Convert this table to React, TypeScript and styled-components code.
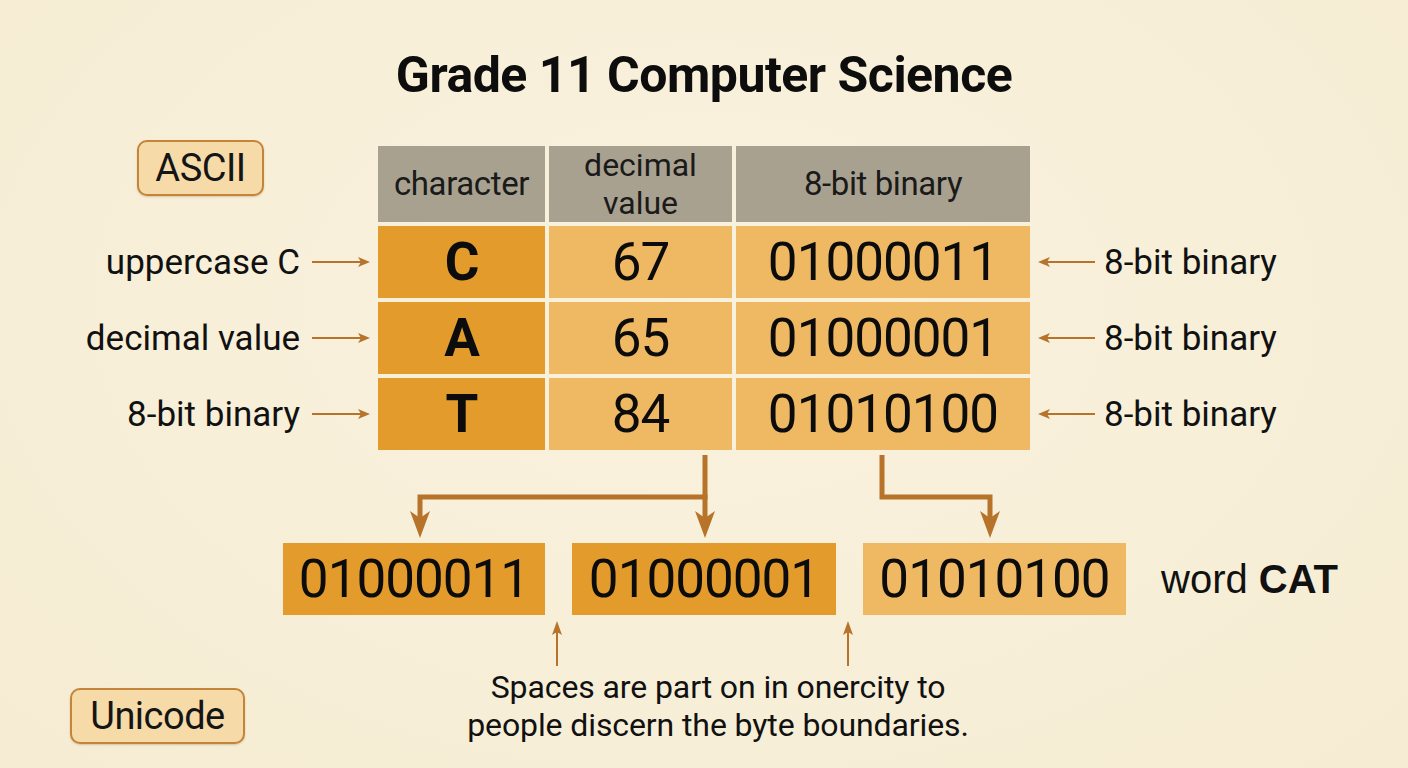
import React from 'react';
import styled, { createGlobalStyle } from 'styled-components';

const Global = createGlobalStyle`
  html, body { margin: 0; padding: 0; }
  body { background: #f7eed7; font-family: Roboto, "Liberation Sans", sans-serif; color: #111; }
`;

const Page = styled.div`
  width: 1408px;
  height: 768px;
  overflow: hidden;
  background: radial-gradient(ellipse at 50% 40%, #f9f2de 0%, #f6ecd3 100%);
  display: flex;
  flex-direction: column;
`;

const Title = styled.h1`
  margin: 0;
  padding-top: 49px;
  height: 52px;
  line-height: 52px;
  text-align: center;
  font-size: 50px;
  font-weight: 700;
  letter-spacing: -0.5px;
  color: #0d0d0d;
`;

const Main = styled.div`
  margin-top: 45px;
  display: flex;
  align-items: flex-start;
`;

const SideCol = styled.div<{ $side: 'left' | 'right' }>`
  display: grid;
  grid-template-rows: 76px repeat(3, 72px);
  row-gap: 4px;
  grid-template-columns: ${(p) => (p.$side === 'left' ? '300px 78px' : '74px auto')};
`;

const Badge = styled.div<{ $w: number }>`
  width: ${(p) => p.$w}px;
  height: 56px;
  box-sizing: border-box;
  border: 2px solid #c4843a;
  border-radius: 10px;
  background: #f6dba9;
  display: flex;
  align-items: center;
  justify-content: center;
  font-size: 38px;
  letter-spacing: -0.5px;
  color: #151515;
  box-shadow: 0 1px 2px rgba(120, 80, 30, 0.25);
`;

const HeaderBadgeSlot = styled.div`
  grid-column: 1 / span 2;
  align-self: start;
  margin-top: -6px;
  padding-left: 137px;
`;

const Label = styled.div<{ $side: 'left' | 'right' }>`
  display: flex;
  align-items: center;
  justify-content: ${(p) => (p.$side === 'left' ? 'flex-end' : 'flex-start')};
  font-size: 35px;
  white-space: nowrap;
  color: #111;
`;

const ArrowCell = styled.div`
  display: flex;
  align-items: center;
`;

const Table = styled.div`
  display: grid;
  grid-template-columns: 167px 183px 294px;
  grid-template-rows: 76px repeat(3, 72px);
  gap: 4px;
`;

const HeadCell = styled.div<{ $twoLine?: boolean }>`
  background: #a9a18f;
  display: flex;
  align-items: center;
  justify-content: center;
  text-align: center;
  font-size: ${(p) => (p.$twoLine ? '32px' : '33px')};
  line-height: ${(p) => (p.$twoLine ? '38px' : '40px')};
  color: #1a1a1a;
  letter-spacing: ${(p) => (p.$twoLine ? '0px' : '-0.4px')};
`;

const Cell = styled.div<{ $tone: 'dark' | 'light'; $bold?: boolean }>`
  background: ${(p) => (p.$tone === 'dark' ? '#e39b2c' : '#efb963')};
  display: flex;
  align-items: center;
  justify-content: center;
  font-size: 53px;
  font-weight: ${(p) => (p.$bold ? 700 : 400)};
  color: #0c0c0c;
  letter-spacing: -1px;
`;

const Connector = styled.svg`
  display: block;
  flex: none;
`;

const BytesRow = styled.div`
  display: flex;
  align-items: center;
  height: 72px;
  padding-left: 283px;
  gap: 27px;
`;

const ByteBox = styled.div<{ $tone: 'dark' | 'light'; $w: number }>`
  width: ${(p) => p.$w}px;
  height: 72px;
  background: ${(p) => (p.$tone === 'dark' ? '#e39b2c' : '#efb963')};
  display: flex;
  align-items: center;
  justify-content: center;
  font-size: 53px;
  letter-spacing: -1px;
  color: #0c0c0c;
`;

const WordLabel = styled.div`
  margin-left: 8px;
  font-size: 40px;
  font-family: "Liberation Sans", Arial, sans-serif;
  color: #111;
  b { font-weight: 700; }
`;

const BottomRow = styled.div`
  display: flex;
  align-items: flex-start;
  padding-left: 70px;
`;

const Caption = styled.div`
  width: 580px;
  margin-left: 183px;
  margin-top: -3px;
  text-align: center;
  font-size: 32px;
  line-height: 38px;
  letter-spacing: -0.1px;
  color: #111;
`;

const UnicodeSlot = styled.div`
  margin-top: 17px;
`;

const ARROW = '#b8732b';

const SideArrow: React.FC<{ dir: 'right' | 'left' }> = ({ dir }) =>
  dir === 'right' ? (
    <svg width="78" height="12" viewBox="0 0 78 12">
      <line x1="12" y1="6" x2="64" y2="6" stroke={ARROW} strokeWidth="2" />
      <path d="M70 6 L58 1 L61 6 L58 11 Z" fill={ARROW} />
    </svg>
  ) : (
    <svg width="74" height="12" viewBox="0 0 74 12">
      <line x1="14" y1="6" x2="65" y2="6" stroke={ARROW} strokeWidth="2" />
      <path d="M8 6 L20 1 L17 6 L20 11 Z" fill={ARROW} />
    </svg>
  );

const rows = [
  { ch: 'C', dec: '67', bin: '01000011', left: 'uppercase C' },
  { ch: 'A', dec: '65', bin: '01000001', left: 'decimal value' },
  { ch: 'T', dec: '84', bin: '01010100', left: '8-bit binary' },
];

const head = (x: number, tipY: number) =>
  `M${x} ${tipY} L${x - 10} ${tipY - 27} L${x} ${tipY - 20} L${x + 10} ${tipY - 27} Z`;

export default function App() {
  return (
    <Page>
      <Global />
      <Title>Grade 11 Computer Science</Title>

      <Main>
        <SideCol $side="left">
          <HeaderBadgeSlot>
            <Badge $w={127}>ASCII</Badge>
          </HeaderBadgeSlot>
          {rows.map((r) => (
            <React.Fragment key={r.ch}>
              <Label $side="left">{r.left}</Label>
              <ArrowCell>
                <SideArrow dir="right" />
              </ArrowCell>
            </React.Fragment>
          ))}
        </SideCol>

        <Table>
          <HeadCell>character</HeadCell>
          <HeadCell $twoLine>
            decimal
            <br />
            value
          </HeadCell>
          <HeadCell>8-bit binary</HeadCell>
          {rows.map((r) => (
            <React.Fragment key={r.ch}>
              <Cell $tone="dark" $bold>
                {r.ch}
              </Cell>
              <Cell $tone="light">{r.dec}</Cell>
              <Cell $tone="light">{r.bin}</Cell>
            </React.Fragment>
          ))}
        </Table>

        <SideCol $side="right">
          <div />
          <div />
          {rows.map((r) => (
            <React.Fragment key={r.ch}>
              <ArrowCell>
                <SideArrow dir="left" />
              </ArrowCell>
              <Label $side="right">8-bit binary</Label>
            </React.Fragment>
          ))}
        </SideCol>
      </Main>

      <Connector width="1408" height="93" viewBox="0 0 1408 93">
        <g stroke={ARROW} strokeWidth="5" fill="none" strokeLinejoin="miter">
          <polyline points="705,5 705,70" />
          <polyline points="420,70 420,47 707.5,47" />
          <polyline points="882,5 882,47 990,47 990,70" />
        </g>
        <g fill={ARROW}>
          <path d={head(420, 88)} />
          <path d={head(705, 88)} />
          <path d={head(990, 88)} />
        </g>
      </Connector>

      <BytesRow>
        <ByteBox $tone="dark" $w={262}>01000011</ByteBox>
        <ByteBox $tone="dark" $w={264}>01000001</ByteBox>
        <ByteBox $tone="light" $w={263}>01010100</ByteBox>
        <WordLabel>
          word <b>CAT</b>
        </WordLabel>
      </BytesRow>

      <Connector width="1408" height="56" viewBox="0 0 1408 56">
        <g stroke={ARROW} strokeWidth="2">
          <line x1="557" y1="14" x2="557" y2="51" />
          <line x1="848" y1="14" x2="848" y2="51" />
        </g>
        <g fill={ARROW}>
          <path d="M557 6 L552 20 L557 17 L562 20 Z" />
          <path d="M848 6 L843 20 L848 17 L853 20 Z" />
        </g>
      </Connector>

      <BottomRow>
        <UnicodeSlot>
          <Badge $w={175}>Unicode</Badge>
        </UnicodeSlot>
        <Caption>
          Spaces are part on in onercity to
          <br />
          people discern the byte boundaries.
        </Caption>
      </BottomRow>
    </Page>
  );
}
